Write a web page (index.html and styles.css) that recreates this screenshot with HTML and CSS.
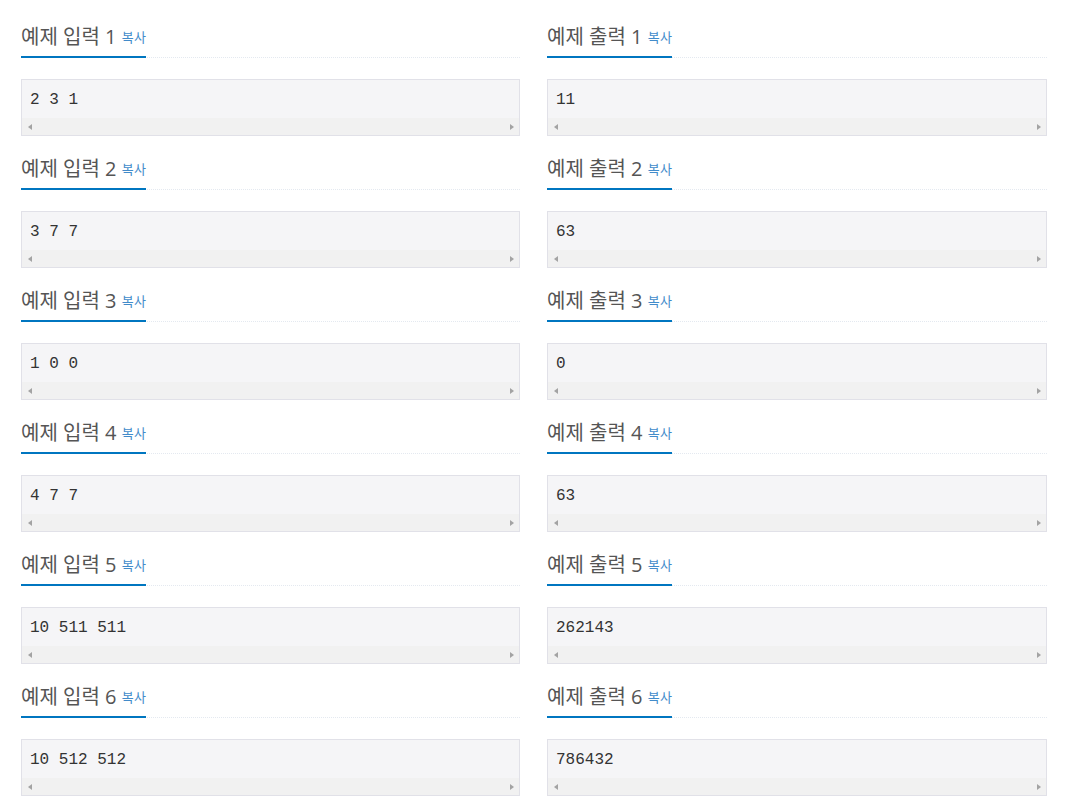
FILE: index.html
```html
<!DOCTYPE html>
<html lang="ko">
<head>
<meta charset="utf-8">
<title>예제</title>
<link rel="stylesheet" href="styles.css">
</head>
<body>
<div class="samples">
  <section class="sample">
    <div class="headline"><h2>예제 입력 1 <button class="copy">복사</button></h2></div>
    <div class="pre-box"><pre>2 3 1</pre><div class="hscroll"><span class="arrow left"></span><span class="arrow right"></span></div></div>
  </section>
  <section class="sample">
    <div class="headline"><h2>예제 출력 1 <button class="copy">복사</button></h2></div>
    <div class="pre-box"><pre>11</pre><div class="hscroll"><span class="arrow left"></span><span class="arrow right"></span></div></div>
  </section>
  <section class="sample">
    <div class="headline"><h2>예제 입력 2 <button class="copy">복사</button></h2></div>
    <div class="pre-box"><pre>3 7 7</pre><div class="hscroll"><span class="arrow left"></span><span class="arrow right"></span></div></div>
  </section>
  <section class="sample">
    <div class="headline"><h2>예제 출력 2 <button class="copy">복사</button></h2></div>
    <div class="pre-box"><pre>63</pre><div class="hscroll"><span class="arrow left"></span><span class="arrow right"></span></div></div>
  </section>
  <section class="sample">
    <div class="headline"><h2>예제 입력 3 <button class="copy">복사</button></h2></div>
    <div class="pre-box"><pre>1 0 0</pre><div class="hscroll"><span class="arrow left"></span><span class="arrow right"></span></div></div>
  </section>
  <section class="sample">
    <div class="headline"><h2>예제 출력 3 <button class="copy">복사</button></h2></div>
    <div class="pre-box"><pre>0</pre><div class="hscroll"><span class="arrow left"></span><span class="arrow right"></span></div></div>
  </section>
  <section class="sample">
    <div class="headline"><h2>예제 입력 4 <button class="copy">복사</button></h2></div>
    <div class="pre-box"><pre>4 7 7</pre><div class="hscroll"><span class="arrow left"></span><span class="arrow right"></span></div></div>
  </section>
  <section class="sample">
    <div class="headline"><h2>예제 출력 4 <button class="copy">복사</button></h2></div>
    <div class="pre-box"><pre>63</pre><div class="hscroll"><span class="arrow left"></span><span class="arrow right"></span></div></div>
  </section>
  <section class="sample">
    <div class="headline"><h2>예제 입력 5 <button class="copy">복사</button></h2></div>
    <div class="pre-box"><pre>10 511 511</pre><div class="hscroll"><span class="arrow left"></span><span class="arrow right"></span></div></div>
  </section>
  <section class="sample">
    <div class="headline"><h2>예제 출력 5 <button class="copy">복사</button></h2></div>
    <div class="pre-box"><pre>262143</pre><div class="hscroll"><span class="arrow left"></span><span class="arrow right"></span></div></div>
  </section>
  <section class="sample">
    <div class="headline"><h2>예제 입력 6 <button class="copy">복사</button></h2></div>
    <div class="pre-box"><pre>10 512 512</pre><div class="hscroll"><span class="arrow left"></span><span class="arrow right"></span></div></div>
  </section>
  <section class="sample">
    <div class="headline"><h2>예제 출력 6 <button class="copy">복사</button></h2></div>
    <div class="pre-box"><pre>786432</pre><div class="hscroll"><span class="arrow left"></span><span class="arrow right"></span></div></div>
  </section>
</div>
</body>
</html>
```
FILE: styles.css
```css
html, body {
  margin: 0;
  padding: 0;
  background: #ffffff;
}

body {
  font-family: "Open Sans", "Noto Sans CJK KR", sans-serif;
  color: #555555;
}

.samples {
  display: grid;
  grid-template-columns: 499fr 500fr;
  column-gap: 27px;
  row-gap: 21px;
  padding: 25px 19px 0 21px;
}

.sample {
  min-width: 0;
}

.headline {
  border-bottom: 1px dotted #e4e9f0;
  margin-bottom: 21px;
}

.headline h2 {
  display: inline-block;
  margin: 0 0 -1px 0;
  padding: 0 0 7px 0;
  font-size: 20px;
  line-height: 24px;
  font-weight: 400;
  color: #555555;
  border-bottom: 2px solid #0076c0;
}

.copy {
  font-family: "Open Sans", "Noto Sans CJK KR", sans-serif;
  font-size: 13px;
  line-height: 14px;
  letter-spacing: 0.5px;
  color: #428bca;
  background: none;
  border: 0;
  padding: 0;
  margin: 0 -1px 0 0;
  vertical-align: 2px;
  cursor: pointer;
}

.pre-box {
  border: 1px solid #e1e1e8;
  background: #f5f5f7;
}

.pre-box pre {
  margin: 0;
  padding: 10px 8px 8px 8px;
  font-family: "Liberation Mono", monospace;
  font-size: 16px;
  line-height: 20px;
  color: #333333;
}

.hscroll {
  height: 17px;
  background: #f1f1f1;
  display: flex;
  align-items: center;
  justify-content: space-between;
  padding: 0 5px 0 6px;
}

.arrow {
  width: 0;
  height: 0;
  border-top: 3px solid transparent;
  border-bottom: 3px solid transparent;
}

.arrow.left {
  border-right: 4px solid #a3a3a3;
}

.arrow.right {
  border-left: 4px solid #a3a3a3;
}
```
